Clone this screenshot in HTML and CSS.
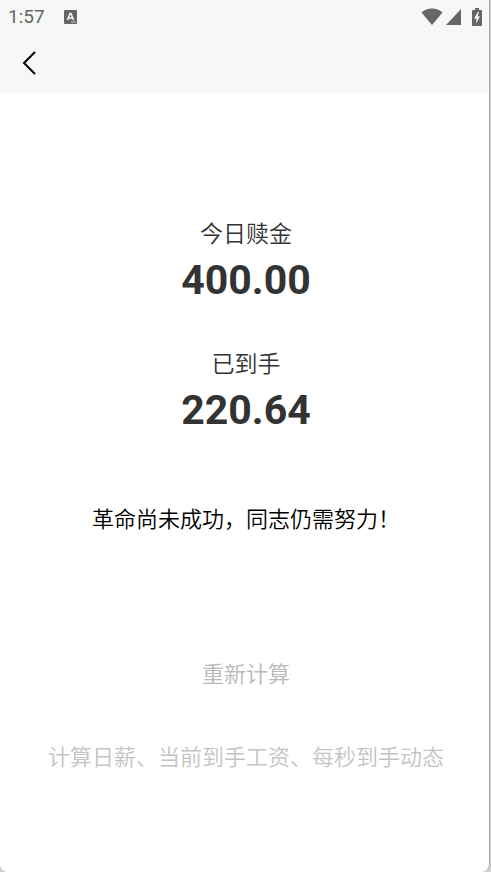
FILE: index.html
```
<!DOCTYPE html>
<html lang="zh-CN">
<head>
  <meta charset="UTF-8">
  <meta name="viewport" content="width=device-width, initial-scale=1">
  <title>今日赎金</title>
  <link rel="stylesheet" href="styles.css">
</head>
<body>
  <div class="screen">
    <header class="top">
      <div class="status-bar">
        <span class="time">1:57</span>
        <svg class="app-icon" width="13" height="14" viewBox="0 0 13 14">
          <rect width="13" height="14" rx="1" fill="#666"/>
          <path d="M3.5 10 6 3.5h1L9.500 10M4.500 8h4" fill="none" stroke="#f7f7f7" stroke-width="1.500"/>
          <path d="M7 12h5" stroke="#ccc" stroke-width="1"/>
        </svg>
        <div class="status-icons">
          <svg width="22" height="17" viewBox="0 0 22 17">
            <path d="M11 17 .5 4.500C6-.700 16-.700 21.500 4.500z" fill="#666"/>
          </svg>
          <svg class="signal" width="15" height="16" viewBox="0 0 15 16">
            <path d="M15 0v16H0z" fill="#666"/>
          </svg>
          <svg class="battery" width="10" height="18" viewBox="0 0 10 18">
            <path d="M3 0h4v2h2q1 0 1 1v14q0 1-1 1H1q-1 0-1-1V3q0-1 1-1h2z" fill="#666"/>
            <path d="M6 4 2 10.500H4.500L4 15.500 8 8.500H5.500L7 4z" fill="#fff"/>
          </svg>
        </div>
      </div>
      <nav class="nav-bar">
        <button class="back" type="button" aria-label="返回">
          <svg width="14" height="24" viewBox="0 0 14 24">
            <path d="M13 1 2 12l11 11" fill="none" stroke="#000" stroke-width="2"/>
          </svg>
        </button>
      </nav>
    </header>

    <main class="content">
      <section class="amount">
        <h2>今日赎金</h2>
        <p>400.00</p>
      </section>
      <section class="amount">
        <h2>已到手</h2>
        <p>220.64</p>
      </section>
      <p class="message">革命尚未成功，同志仍需努力！</p>
      <button class="reset" type="button">重新计算</button>
      <p class="tips">计算日薪、当前到手工资、每秒到手动态</p>
    </main>
  </div>
</body>
</html>
```

FILE: styles.css
```
* {
  box-sizing: border-box;
}

body {
  margin: 0;
  background: #d0d0d0;
  color: #333;
  font-family: Roboto, "Noto Sans CJK SC", sans-serif;
}

.screen {
  min-height: 100vh;
  margin-right: 1px;
  background: #fff;
  border-right: 1px solid #aaa;
  border-radius: 0 0 8px 8px;
}

.top {
  background: #f7f7f7;
}

.status-bar {
  display: flex;
  align-items: center;
  height: 33px;
  padding: 0 7px 0 8px;
  color: #666;
}

.time {
  font-size: 19px;
  line-height: 33px;
}

.app-icon {
  margin-left: 19px;
}

.status-icons {
  display: flex;
  align-items: center;
  margin-left: auto;
}

.signal {
  margin-left: 3px;
}

.battery {
  margin-left: 11px;
}

.nav-bar {
  display: flex;
  align-items: center;
  height: 60px;
  padding: 0 16px;
}

.back {
  display: flex;
  padding: 6px;
  border: none;
  background: none;
  cursor: pointer;
}

.content {
  display: flex;
  flex-direction: column;
  align-items: center;
  padding: 126px 0 0 3px;
}

.amount {
  margin-bottom: 45px;
  text-align: center;
}

.amount h2 {
  margin: 0 0 5px;
  font-size: 23px;
  font-weight: 350;
  line-height: 32px;
}

.amount p {
  margin: 0;
  font-size: 41px;
  font-weight: bold;
  line-height: 48px;
}

.message,
.reset,
.tips {
  margin: 0;
  font-size: 22px;
  font-weight: 350;
  line-height: 32px;
}

.message {
  margin-top: 25px;
  color: #000;
}

.reset {
  margin: 123px 0 51px;
  padding: 0;
  border: none;
  background: none;
  color: #b8b8b8;
  font-family: inherit;
  cursor: pointer;
}

.tips {
  color: #c4c4c4;
}
```
